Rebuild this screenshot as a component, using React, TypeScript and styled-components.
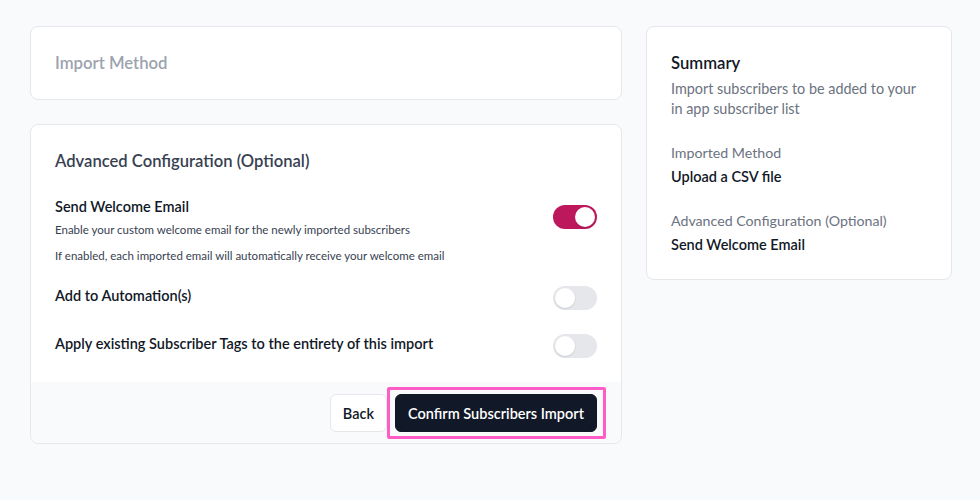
import React, { useState } from 'react';
import styled, { createGlobalStyle } from 'styled-components';

const GlobalStyle = createGlobalStyle`
  html, body {
    margin: 0;
    padding: 0;
    background: #f9fafb;
    font-family: Lato, "Open Sans", sans-serif;
    color: #111827;
  }
  * { box-sizing: border-box; }
`;

const Page = styled.main`
  display: grid;
  grid-template-columns: 592px 306px;
  column-gap: 24px;
  align-items: start;
  padding: 26px 28px 0 30px;
  min-height: 500px;
`;

const Column = styled.div`
  display: flex;
  flex-direction: column;
  gap: 24px;
`;

const Card = styled.section`
  background: #ffffff;
  border: 1px solid #e5e7eb;
  border-radius: 8px;
`;

const CardBody = styled.div`
  padding: 24px;
`;

const MutedHeading = styled.h2`
  margin: 0;
  font-size: 16.7px;
  line-height: 24px;
  font-weight: 600;
  color: #9ca3af;
`;

const SectionTitle = styled.h2`
  margin: 0 0 24px;
  font-size: 16.6px;
  line-height: 24px;
  font-weight: 600;
  color: #374151;
`;

const OptionList = styled.div`
  display: flex;
  flex-direction: column;
  gap: 24px;
`;

const OptionRow = styled.div`
  display: flex;
  justify-content: space-between;
  align-items: flex-start;
  gap: 16px;
`;

const OptionText = styled.div`
  display: flex;
  flex-direction: column;
`;

const OptionLabel = styled.div`
  font-size: 14.5px;
  line-height: 20px;
  font-weight: 600;
  color: #111827;
`;

const OptionHint = styled.p`
  margin: 5px 0 0;
  font-size: 11.5px;
  line-height: 16px;
  color: #374151;
  & + & {
    margin-top: 12px;
    line-height: 12px;
  }
`;

const SwitchTrack = styled.button<{ $on: boolean; $offset: number }>`
  position: relative;
  flex: none;
  width: 44px;
  height: 24px;
  margin-top: ${(p) => p.$offset}px;
  padding: 0;
  border: none;
  border-radius: 12px;
  background: ${(p) => (p.$on ? '#be185d' : '#e5e7eb')};
  cursor: pointer;
`;

const SwitchKnob = styled.span<{ $on: boolean }>`
  position: absolute;
  top: 2px;
  left: ${(p) => (p.$on ? '22px' : '2px')};
  width: 20px;
  height: 20px;
  border-radius: 50%;
  background: #ffffff;
  box-shadow: 0 1px 2px rgba(0, 0, 0, 0.12);
`;

const Footer = styled.div`
  display: flex;
  justify-content: flex-end;
  align-items: center;
  gap: 8px;
  padding: 12px 24px 11px;
  background: #f9fafb;
  border-radius: 0 0 8px 8px;
`;

const Button = styled.button<{ $primary?: boolean }>`
  height: 38px;
  padding: 0 12px;
  border-radius: 6px;
  font-family: inherit;
  font-size: 14.5px;
  font-weight: 600;
  cursor: pointer;
  border: 1px solid ${(p) => (p.$primary ? '#111827' : '#e5e7eb')};
  background: ${(p) => (p.$primary ? '#111827' : '#ffffff')};
  color: ${(p) => (p.$primary ? '#ffffff' : '#111827')};
`;

const Highlight = styled.div`
  position: relative;
  display: flex;
  &::after {
    content: '';
    position: absolute;
    inset: -7px -9px -7px -8px;
    border: 3px solid #ff5cc8;
    border-radius: 2px;
    pointer-events: none;
  }
`;

const SummaryTitle = styled.h3`
  margin: 0;
  font-size: 16.7px;
  line-height: 24px;
  font-weight: 600;
  color: #111827;
`;

const SummaryText = styled.p`
  margin: 4px 0 0;
  font-size: 14.4px;
  line-height: 20px;
  color: #6b7280;
`;

const SummaryGroup = styled.div`
  margin-top: 24px;
  display: flex;
  flex-direction: column;
  gap: 4px;
`;

const SummaryLabel = styled.div`
  font-size: 14.2px;
  line-height: 20px;
  color: #6b7280;
`;

const SummaryValue = styled.div`
  font-size: 14.5px;
  line-height: 20px;
  font-weight: 600;
  color: #111827;
`;

function Switch({ on, onToggle, offset = 0 }: { on: boolean; onToggle: () => void; offset?: number }) {
  return (
    <SwitchTrack $on={on} $offset={offset} onClick={onToggle} role="switch" aria-checked={on}>
      <SwitchKnob $on={on} />
    </SwitchTrack>
  );
}

export default function App() {
  const [welcome, setWelcome] = useState(true);
  const [automation, setAutomation] = useState(false);
  const [tags, setTags] = useState(false);

  return (
    <>
      <GlobalStyle />
      <Page>
        <Column>
          <Card>
            <CardBody>
              <MutedHeading>Import Method</MutedHeading>
            </CardBody>
          </Card>

          <Card>
            <CardBody>
              <SectionTitle>Advanced Configuration (Optional)</SectionTitle>
              <OptionList>
                <OptionRow>
                  <OptionText>
                    <OptionLabel>Send Welcome Email</OptionLabel>
                    <OptionHint>Enable your custom welcome email for the newly imported subscribers</OptionHint>
                    <OptionHint>If enabled, each imported email will automatically receive your welcome email</OptionHint>
                  </OptionText>
                  <Switch on={welcome} offset={8} onToggle={() => setWelcome(!welcome)} />
                </OptionRow>
                <OptionRow>
                  <OptionLabel>Add to Automation(s)</OptionLabel>
                  <Switch on={automation} onToggle={() => setAutomation(!automation)} />
                </OptionRow>
                <OptionRow>
                  <OptionLabel>Apply existing Subscriber Tags to the entirety of this import</OptionLabel>
                  <Switch on={tags} onToggle={() => setTags(!tags)} />
                </OptionRow>
              </OptionList>
            </CardBody>
            <Footer>
              <Button>Back</Button>
              <Highlight>
                <Button $primary>Confirm Subscribers Import</Button>
              </Highlight>
            </Footer>
          </Card>
        </Column>

        <Card>
          <CardBody>
            <SummaryTitle>Summary</SummaryTitle>
            <SummaryText>Import subscribers to be added to your in app subscriber list</SummaryText>
            <SummaryGroup>
              <SummaryLabel>Imported Method</SummaryLabel>
              <SummaryValue>Upload a CSV file</SummaryValue>
            </SummaryGroup>
            <SummaryGroup>
              <SummaryLabel>Advanced Configuration (Optional)</SummaryLabel>
              <SummaryValue>{welcome ? 'Send Welcome Email' : 'None'}</SummaryValue>
            </SummaryGroup>
          </CardBody>
        </Card>
      </Page>
    </>
  );
}
